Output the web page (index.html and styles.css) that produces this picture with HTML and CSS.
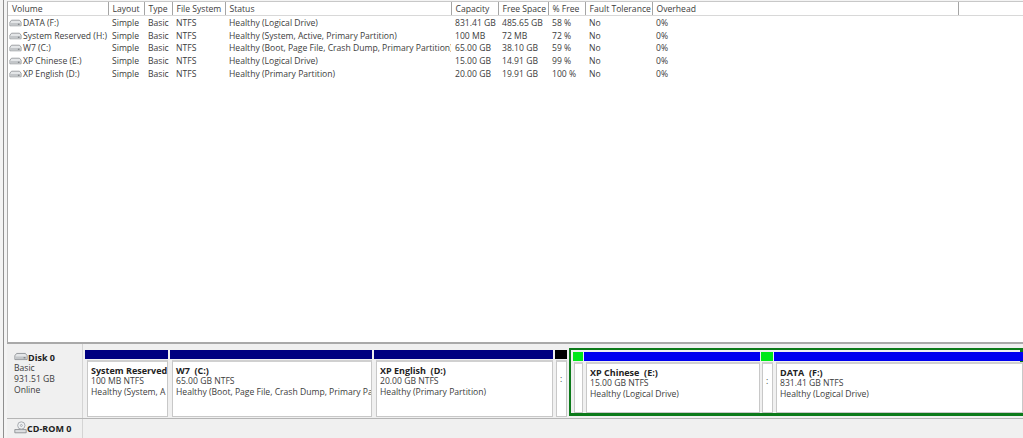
FILE: index.html
```html
<!DOCTYPE html>
<html lang="en">
<head>
    <meta charset="UTF-8">
    <meta name="viewport" content="width=device-width, initial-scale=1.0">
    <title>Disk Management</title>
    <link rel="stylesheet" href="styles.css">
</head>
<body>
    <svg width="0" height="0" class="defs">
        <symbol id="hdd" viewBox="0 0 16 10">
            <path d="M1 4 3 1.500H13L15 4V8.500H1Z" fill="#e4e6e8" stroke="#8b8f93"/>
            <path d="M1.500 5H14.500V8H1.500Z" fill="#c3c6c9"/>
            <rect x="11" y="6" width="2" height="1" fill="#5c6063"/>
        </symbol>
        <symbol id="cdrom" viewBox="0 0 16 16">
            <path d="M1 10.500H15V14.500H1Z" fill="#dcdee0" stroke="#85898d"/>
            <circle cx="9" cy="5.500" r="4.500" fill="#eef0f2" stroke="#9a9ea2"/>
            <circle cx="9" cy="5.500" r="1.200" fill="#fff" stroke="#9a9ea2"/>
        </symbol>
    </svg>

    <div class="frame">
        <div class="list">
            <table class="volumes">
                <colgroup>
                    <col class="c-volume"><col class="c-layout"><col class="c-type"><col class="c-fs"><col class="c-status">
                    <col class="c-capacity"><col class="c-free"><col class="c-pct"><col class="c-fault"><col class="c-over"><col>
                </colgroup>
                <thead>
                    <tr>
                        <th>Volume</th><th>Layout</th><th>Type</th><th>File System</th><th>Status</th>
                        <th>Capacity</th><th>Free Space</th><th>% Free</th><th>Fault Tolerance</th><th>Overhead</th><th></th>
                    </tr>
                </thead>
                <tbody>
                    <tr>
                        <td class="vol"><svg class="vol-icon"><use href="#hdd"/></svg>DATA (F:)</td><td>Simple</td><td>Basic</td><td>NTFS</td><td>Healthy (Logical Drive)</td>
                        <td>831.41 GB</td><td>485.65 GB</td><td>58 %</td><td>No</td><td>0%</td><td></td>
                    </tr>
                    <tr>
                        <td class="vol"><svg class="vol-icon"><use href="#hdd"/></svg>System Reserved (H:)</td><td>Simple</td><td>Basic</td><td>NTFS</td><td>Healthy (System, Active, Primary Partition)</td>
                        <td>100 MB</td><td>72 MB</td><td>72 %</td><td>No</td><td>0%</td><td></td>
                    </tr>
                    <tr>
                        <td class="vol"><svg class="vol-icon"><use href="#hdd"/></svg>W7 (C:)</td><td>Simple</td><td>Basic</td><td>NTFS</td><td>Healthy (Boot, Page File, Crash Dump, Primary Partition)</td>
                        <td>65.00 GB</td><td>38.10 GB</td><td>59 %</td><td>No</td><td>0%</td><td></td>
                    </tr>
                    <tr>
                        <td class="vol"><svg class="vol-icon"><use href="#hdd"/></svg>XP Chinese (E:)</td><td>Simple</td><td>Basic</td><td>NTFS</td><td>Healthy (Logical Drive)</td>
                        <td>15.00 GB</td><td>14.91 GB</td><td>99 %</td><td>No</td><td>0%</td><td></td>
                    </tr>
                    <tr>
                        <td class="vol"><svg class="vol-icon"><use href="#hdd"/></svg>XP English (D:)</td><td>Simple</td><td>Basic</td><td>NTFS</td><td>Healthy (Primary Partition)</td>
                        <td>20.00 GB</td><td>19.91 GB</td><td>100 %</td><td>No</td><td>0%</td><td></td>
                    </tr>
                </tbody>
            </table>
        </div>

        <div class="disks">
            <div class="disk-row">
                <div class="disk-label">
                    <div class="disk-name"><svg class="disk-icon"><use href="#hdd"/></svg>Disk 0</div>
                    <div>Basic</div>
                    <div>931.51 GB</div>
                    <div>Online</div>
                </div>
                <div class="parts">
                    <div class="part p-reserved">
                        <div class="bar navy"></div>
                        <div class="box"><b>System Reserved</b><span>100 MB NTFS</span><span>Healthy (System, A</span></div>
                    </div>
                    <div class="part p-w7">
                        <div class="bar navy"></div>
                        <div class="box"><b>W7&nbsp; (C:)</b><span>65.00 GB NTFS</span><span>Healthy (Boot, Page File, Crash Dump, Primary Pa</span></div>
                    </div>
                    <div class="part p-xpen">
                        <div class="bar navy"></div>
                        <div class="box"><b>XP English&nbsp; (D:)</b><span>20.00 GB NTFS</span><span>Healthy (Primary Partition)</span></div>
                    </div>
                    <div class="part p-gap">
                        <div class="bar black"></div>
                        <div class="box narrow">:</div>
                    </div>
                    <div class="extended">
                        <div class="part p-free1">
                            <div class="bar green"></div>
                            <div class="box narrow"></div>
                        </div>
                        <div class="part p-xpcn">
                            <div class="bar blue"></div>
                            <div class="box"><b>XP Chinese&nbsp; (E:)</b><span>15.00 GB NTFS</span><span>Healthy (Logical Drive)</span></div>
                        </div>
                        <div class="part p-free2">
                            <div class="bar green"></div>
                            <div class="box narrow">:</div>
                        </div>
                        <div class="part p-data">
                            <div class="bar blue"></div>
                            <div class="box"><b>DATA&nbsp; (F:)</b><span>831.41 GB NTFS</span><span>Healthy (Logical Drive)</span></div>
                        </div>
                    </div>
                </div>
            </div>
            <div class="disk-row cd-row">
                <div class="disk-label">
                    <div class="disk-name"><svg class="cd-icon"><use href="#cdrom"/></svg>CD-ROM 0</div>
                </div>
                <div class="parts"></div>
            </div>
        </div>
    </div>
</body>
</html>
```

FILE: styles.css
```css
html, body {
    height: 100%;
}
body {
    margin: 0;
    overflow: hidden;
    background: #f4f4f4;
    color: #3c3c3c;
    font-family: "Open Sans", "Noto Sans", sans-serif;
    font-size: 8.6px;
}
.defs {
    position: absolute;
}
.frame {
    height: 438px;
    margin-left: 3px;
    padding-left: 3px;
    border-left: 1px solid #8f8f8f;
    display: flex;
    flex-direction: column;
    box-sizing: border-box;
}

/* volume list */
.list {
    height: 341px;
    border-left: 1px solid #a8a8a8;
    border-top: 1px solid #c8c8c8;
    margin-top: 1px;
    background: #fff;
    box-sizing: border-box;
    flex: none;
}
.volumes {
    width: 1015px;
    table-layout: fixed;
    border-collapse: collapse;
}
.c-volume { width: 100px; }
.c-layout { width: 36px; }
.c-type { width: 28px; }
.c-fs { width: 53px; }
.c-status { width: 226px; }
.c-capacity { width: 47px; }
.c-free { width: 50px; }
.c-pct { width: 37px; }
.c-fault { width: 67px; }
.c-over { width: 306px; }
.volumes th {
    height: 13px;
    padding: 0 0 0 4px;
    font-weight: 400;
    text-align: left;
    border-right: 1px solid #a5a5a5;
    border-bottom: 1px solid #d8d8d8;
    white-space: nowrap;
    overflow: hidden;
}
.volumes th:last-child {
    border-right: 0;
}
.volumes td {
    height: 12.6px;
    padding: 0 0 0 4px;
    white-space: nowrap;
    overflow: hidden;
    line-height: 12px;
}
.volumes td.vol {
    padding-left: 1px;
}
.volumes tbody tr:first-child td {
    padding-top: 1px;
}
.vol-icon {
    width: 13px;
    height: 8px;
    margin-right: 1px;
    vertical-align: -1px;
}

/* graphical view */
.disks {
    flex: 1;
    border-top: 2px solid #a9a9a9;
    background: #f0f0f0;
}
.disk-row {
    height: 75px;
    display: flex;
    border-bottom: 1px solid #b5b5b5;
    box-sizing: border-box;
}
.disk-label {
    width: 76px;
    flex: none;
    padding: 8px 0 0 7px;
    box-sizing: border-box;
    line-height: 11px;
    border-right: 1px solid #d4d4d4;
}
.disk-name {
    font-weight: 700;
    color: #222;
    font-size: 9px;
}
.disk-icon {
    width: 14px;
    height: 9px;
}
.cd-icon {
    width: 13px;
    height: 13px;
    vertical-align: -2px;
}
.parts {
    flex: 1;
    display: flex;
    gap: 2px;
    padding: 6px 0 0 2px;
    height: 67px;
}
.cd-row {
    height: 20px;
    border-bottom: 0;
}
.cd-row .disk-label {
    padding-top: 2px;
}
.part {
    display: flex;
    flex-direction: column;
    flex: none;
}
.bar {
    height: 9px;
    flex: none;
}
.navy { background: #000080; }
.blue { background: #0000f0; }
.black { background: #000; }
.green { background: #00e818; }
.box {
    flex: 1;
    margin-top: 1px;
    padding: 3px 0 0 3px;
    margin-left: 2px;
    background: #fff;
    border: 1px solid #c8c8c8;
    border-top: 2px solid #d0d0d0;
    display: flex;
    flex-direction: column;
    line-height: 11px;
    white-space: nowrap;
    overflow: hidden;
    box-sizing: border-box;
}
.box b {
    color: #222;
    font-size: 9px;
}
.narrow {
    margin-left: 1px;
    padding: 12px 0 0 3px;
}
.p-reserved { width: 83px; }
.p-w7 { width: 202px; }
.p-xpen { width: 179px; }
.p-gap { width: 12px; }
.extended {
    flex: none;
    width: 454px;
    height: 68px;
    margin-top: -2px;
    margin-left: 0;
    display: flex;
    gap: 1px;
    padding: 2px 2px 0 2px;
    border: 1px solid #0c7a1a;
    border-width: 2px 3px 3px 2px;
    box-sizing: border-box;
}
.p-free1 { width: 10px; }
.p-xpcn { width: 176px; }
.p-free2 { width: 12px; }
.p-data { width: 249px; }
```
